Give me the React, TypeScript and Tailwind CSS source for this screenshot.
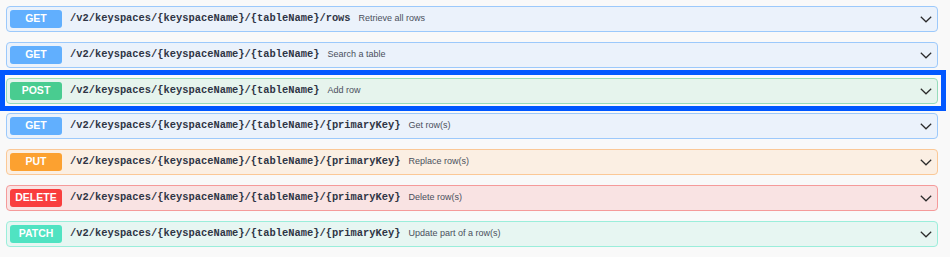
type Op = {
  method: string;
  path: string;
  summary: string;
  card: string;
  badge: string;
  active?: boolean;
};

const ops: Op[] = [
  {
    method: 'GET',
    path: '/v2/keyspaces/{keyspaceName}/{tableName}/rows',
    summary: 'Retrieve all rows',
    card: 'border-[#9cc9fb] bg-[#ebf2fb]',
    badge: 'bg-[#61affe]',
  },
  {
    method: 'GET',
    path: '/v2/keyspaces/{keyspaceName}/{tableName}',
    summary: 'Search a table',
    card: 'border-[#9cc9fb] bg-[#ebf2fb]',
    badge: 'bg-[#61affe]',
  },
  {
    method: 'POST',
    path: '/v2/keyspaces/{keyspaceName}/{tableName}',
    summary: 'Add row',
    card: 'border-[#96dcbb] bg-[#e6f4ed]',
    badge: 'bg-[#49cc90]',
    active: true,
  },
  {
    method: 'GET',
    path: '/v2/keyspaces/{keyspaceName}/{tableName}/{primaryKey}',
    summary: 'Get row(s)',
    card: 'border-[#9cc9fb] bg-[#ebf2fb]',
    badge: 'bg-[#61affe]',
  },
  {
    method: 'PUT',
    path: '/v2/keyspaces/{keyspaceName}/{tableName}/{primaryKey}',
    summary: 'Replace row(s)',
    card: 'border-[#fbc896] bg-[#fbefe3]',
    badge: 'bg-[#fca130]',
  },
  {
    method: 'DELETE',
    path: '/v2/keyspaces/{keyspaceName}/{tableName}/{primaryKey}',
    summary: 'Delete row(s)',
    card: 'border-[#f59a9a] bg-[#f9e3e3]',
    badge: 'bg-[#f93e3e]',
  },
  {
    method: 'PATCH',
    path: '/v2/keyspaces/{keyspaceName}/{tableName}/{primaryKey}',
    summary: 'Update part of a row(s)',
    card: 'border-[#9beedb] bg-[#e7f6f2]',
    badge: 'bg-[#50e3c2]',
  },
];

// thin swagger-style expand arrow
function Arrow() {
  return (
    <svg
      viewBox="0 0 12 7"
      className="ml-auto mr-[4px] h-[7px] w-[12px] shrink-0"
      fill="none"
      stroke="#2b2b2b"
      strokeWidth={1.2}
    >
      <polyline points="0.8,0.8 6,5.8 11.2,0.8" />
    </svg>
  );
}

function OpBlock({ op }: { op: Op }) {
  return (
    <div
      className={`flex h-[26px] items-center rounded-[4px] border pl-[3px] pr-[1px] ${op.card}`}
    >
      <span
        className={`flex h-[18px] w-[52px] shrink-0 items-center justify-center rounded-[3px] text-[10.5px] font-bold text-white ${op.badge}`}
        style={{ fontFamily: '"Liberation Sans", Arial, sans-serif' }}
      >
        {op.method}
      </span>
      <span
        className="ml-[8px] text-[10.4px] font-bold text-[#2f3545]"
        style={{ fontFamily: '"Liberation Mono", "Courier New", monospace' }}
      >
        {op.path}
      </span>
      <span
        className="ml-[8px] text-[9px] text-[#4a4f5c]"
        style={{ fontFamily: '"Liberation Sans", Arial, sans-serif' }}
      >
        {op.summary}
      </span>
      <Arrow />
    </div>
  );
}

export default function App() {
  return (
    <div className="h-[257px] w-[950px] bg-[#f9f9f9] pl-[6px] pr-[12px] pt-[6px]">
      <div className="flex flex-col gap-[10px]">
        {ops.map((op, i) =>
          op.active ? (
            <div
              key={i}
              className="-mx-[6px] -my-[8px] mr-[-8px] border-[5px] border-[#0057ff] pt-[3px] pb-[2px] pl-[1px] pr-[3px]"
            >
              <OpBlock op={op} />
            </div>
          ) : (
            <OpBlock key={i} op={op} />
          )
        )}
      </div>
    </div>
  );
}
